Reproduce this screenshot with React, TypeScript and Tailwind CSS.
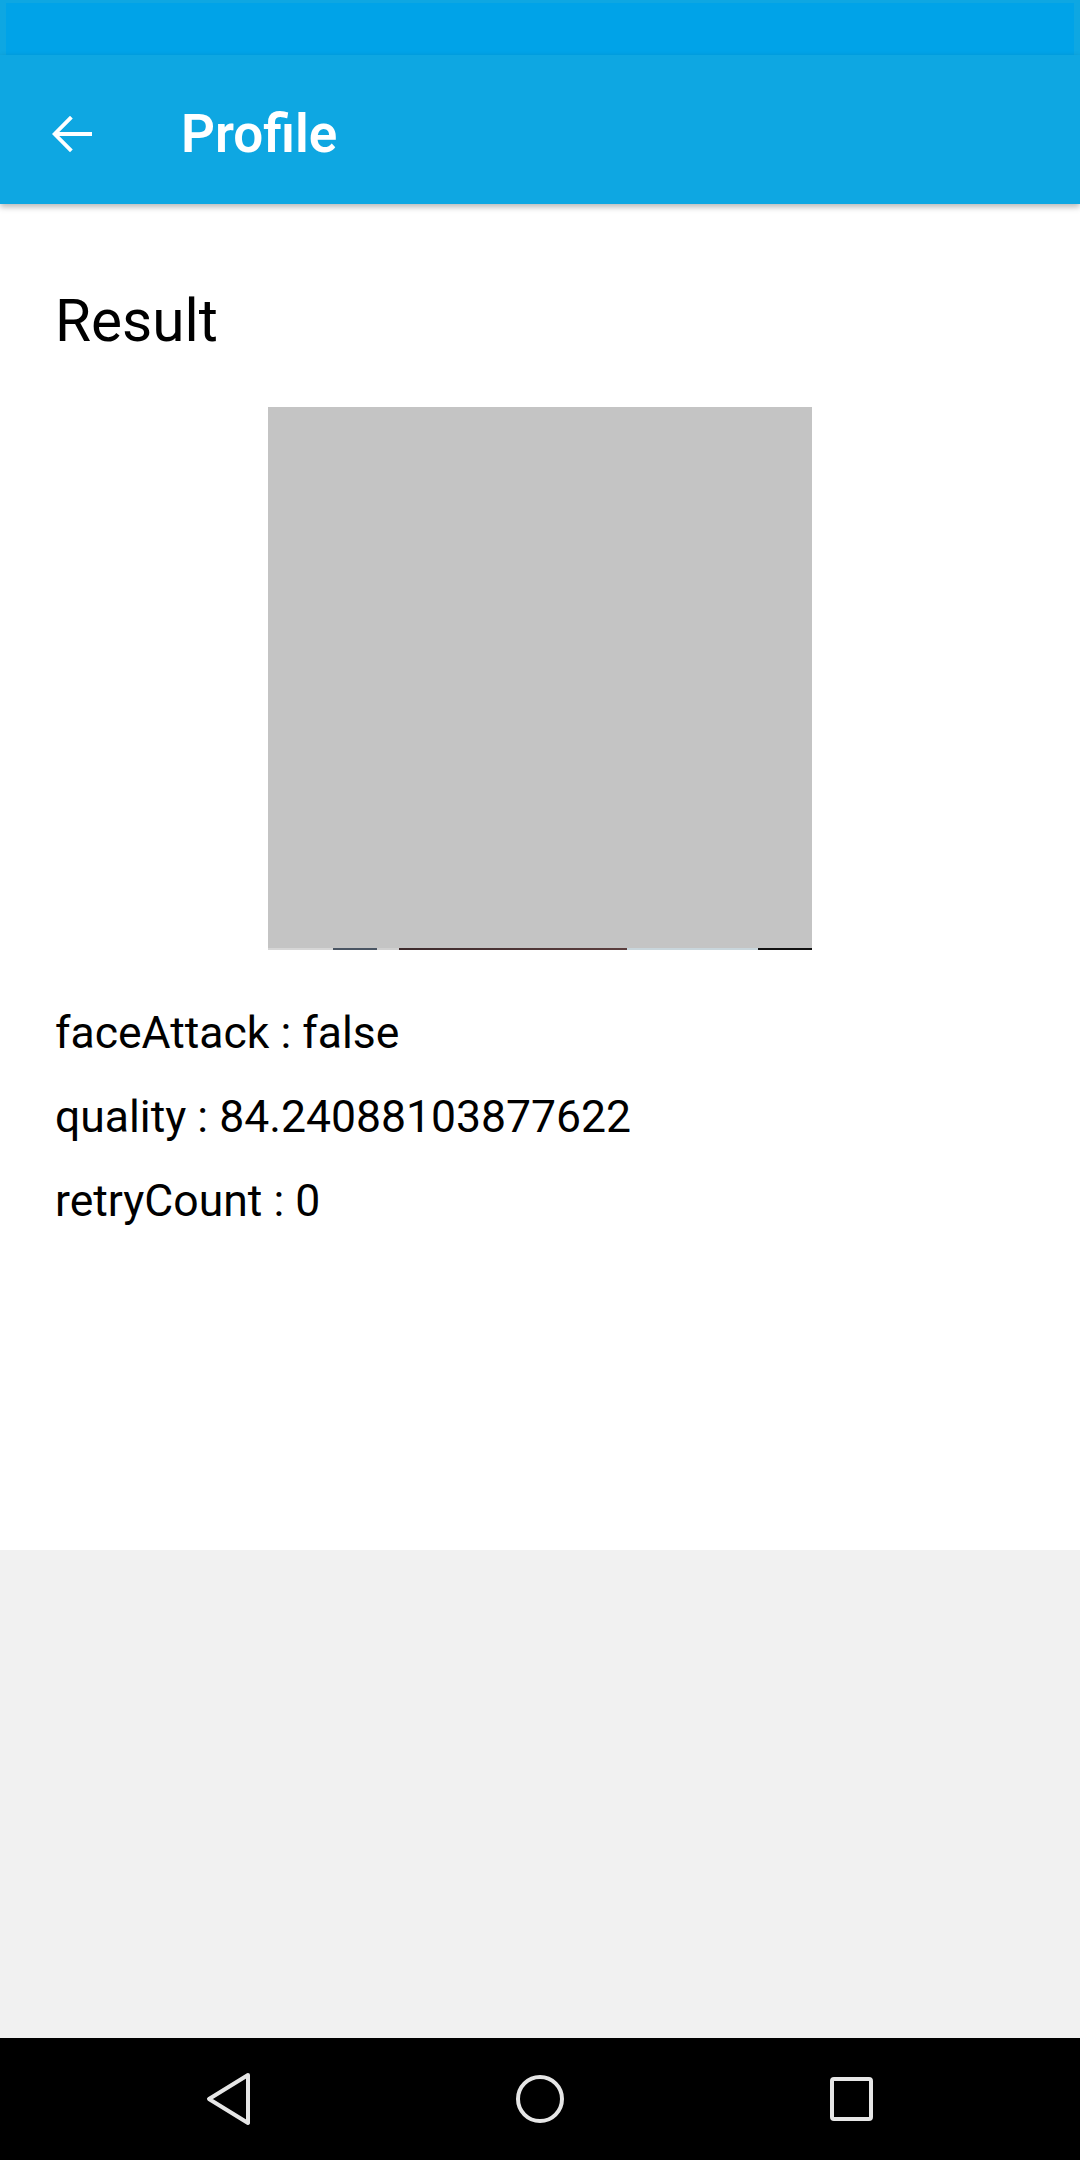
const font = { fontFamily: "Roboto, 'Noto Sans', sans-serif" };

const BackArrow = () => (
  <svg width="60" height="60" viewBox="0 0 24 24" fill="#ffffff">
    <path d="M20 11.2H6.9l5.4-5.4-1.1-1.1L4 12l7.2 7.3 1.1-1.1-5.4-5.4H20z" />
  </svg>
);

const NavBack = () => (
  <svg width="60" height="60" viewBox="0 0 60 60" fill="none" stroke="#e6e6e6" strokeWidth="4" strokeLinejoin="round">
    <polygon points="49,6 10,30 49,54" />
  </svg>
);

const NavHome = () => (
  <svg width="60" height="60" viewBox="0 0 60 60" fill="none" stroke="#e6e6e6" strokeWidth="4">
    <circle cx="30" cy="30" r="22" />
  </svg>
);

const NavRecents = () => (
  <svg width="60" height="60" viewBox="0 0 60 60" fill="none" stroke="#e6e6e6" strokeWidth="4">
    <rect x="11" y="10" width="39" height="40" rx="2" />
  </svg>
);

const rows = [
  "faceAttack : false",
  "quality : 84.24088103877622",
  "retryCount : 0",
];

export default function App() {
  return (
    <div className="w-[1080px] h-[2160px] flex flex-col bg-white overflow-hidden" style={font}>
      {/* status bar */}
      <div className="h-[55px] bg-[#0ea7e2] px-[6px] pt-[3px]">
        <div className="h-full bg-[#00a3e8]" />
      </div>

      {/* toolbar */}
      <div className="relative z-10 h-[149px] bg-[#0ea7e2] flex items-center pt-[8px] shadow-[0_3px_6px_rgba(0,0,0,0.28)]">
        <div className="ml-[42px] w-[60px] h-[60px] flex items-center justify-center">
          <BackArrow />
        </div>
        <h1 className="ml-[79px] text-[53px] leading-[60px] font-semibold text-white">Profile</h1>
      </div>

      {/* content */}
      <div className="h-[1346px] bg-white px-[55px] pt-[81px]">
        <h2 className="text-[58.5px] leading-[72px] text-black">Result</h2>
        <div className="mt-[50px] flex justify-center">
          <div className="w-[544px] h-[543px] flex flex-col">
            <div className="flex-1 bg-[#c4c4c4]" />
            <div className="h-[2px] bg-[linear-gradient(90deg,#d6d6d6_0%,#d6d6d6_12%,#4a5563_12%,#4a5563_20%,#d0d0d0_20%,#d0d0d0_24%,#3d2a2c_24%,#5b3e3e_66%,#c9d6dc_66%,#c9d6dc_90%,#111111_90%)]" />
          </div>
        </div>
        <div className="mt-[55px] flex flex-col gap-[28px]">
          {rows.map((r) => (
            <p key={r} className="text-[44.5px] leading-[56px] text-black">{r}</p>
          ))}
        </div>
      </div>

      <div className="flex-1 bg-[#f1f1f1]" />

      {/* navigation bar */}
      <div className="h-[122px] bg-black flex items-center justify-center gap-[251px]">
        <NavBack />
        <NavHome />
        <NavRecents />
      </div>
    </div>
  );
}
